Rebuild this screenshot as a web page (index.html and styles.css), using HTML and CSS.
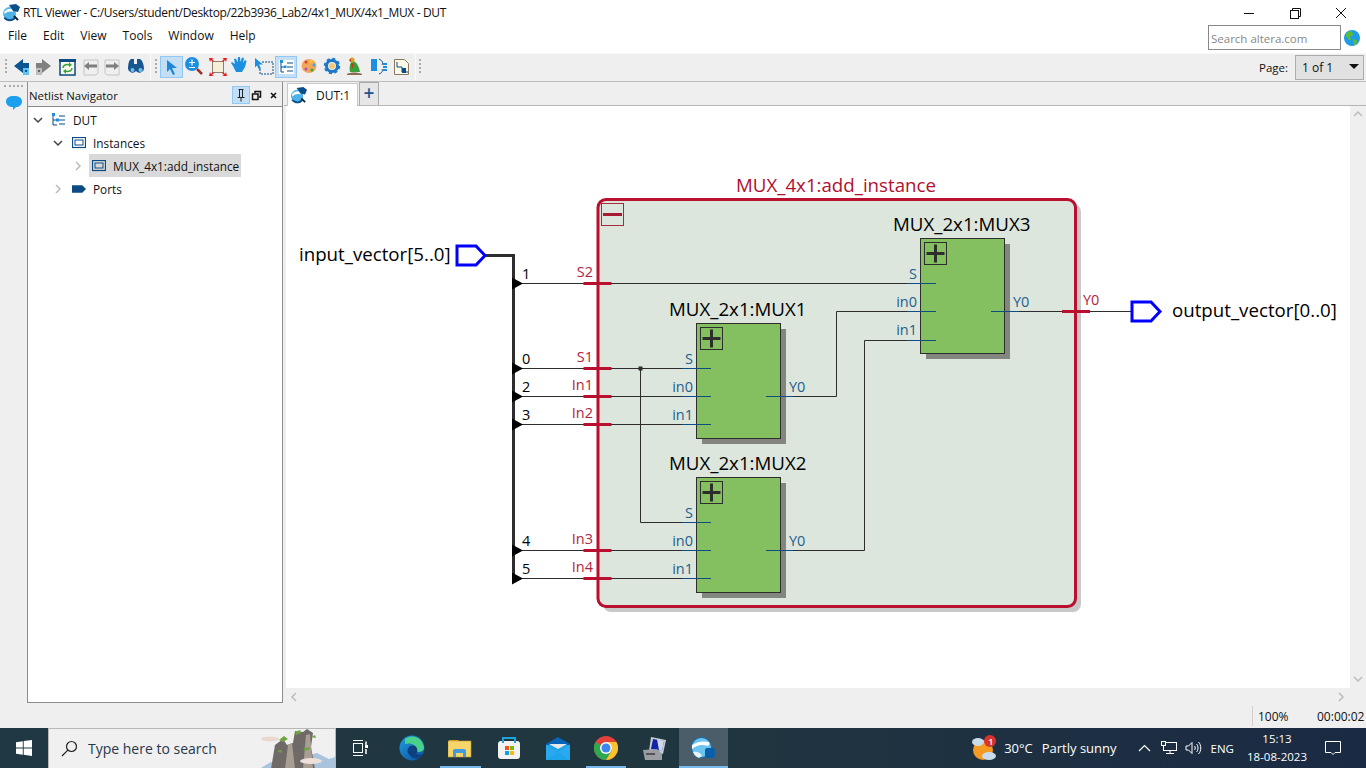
FILE: index.html
```html
<!DOCTYPE html>
<html lang="en">
<head>
    <meta charset="UTF-8">
    <meta name="viewport" content="width=device-width, initial-scale=1.0">
    <title>RTL Viewer</title>
    <link rel="stylesheet" href="styles.css">
</head>
<body>
    <svg class="defs" width="0" height="0">
        <defs>
            <symbol id="logo" viewBox="0 0 18 18">
                <circle cx="7.5" cy="9.5" r="6.5" fill="#4fb3e8"/>
                <path d="M2 8c2-3 6-4 10-3l-1 3c-3-1-6-.5-8 2z" fill="#fff"/>
                <path d="M3 13c3 3 7 3 9 0l1.500 1.500c-3 4-9 3.500-12-.5z" fill="#0b4f8a"/>
                <path d="M7 1l7-1 4 3-2 5-5-1z" fill="#0b4f8a"/>
                <path d="M12 12l4 4" stroke="#123" stroke-width="2"/>
            </symbol>
            <g id="mux-box">
                <rect x="5.500" y="5.500" width="84" height="115" class="mux-shadow"/>
                <rect x="0" y="0" width="84" height="115" class="mux-body"/>
                <rect x="4" y="4" width="22" height="22" class="mux-toggle"/>
                <path d="M6 15h18M15 6v18" class="mux-plus"/>
            </g>
            <polygon id="tap" points="0,-6 0,6 11,0" fill="#000"/>
        </defs>
    </svg>

    <div class="app">
        <div class="titlebar">
            <svg class="title-logo" width="18" height="18"><use href="#logo"/></svg>
            <span class="title-text">RTL Viewer - C:/Users/student/Desktop/22b3936_Lab2/4x1_MUX/4x1_MUX - DUT</span>
            <div class="window-btns">
                <svg class="win-btn" width="46" height="20" viewBox="0 0 46 20"><path d="M18 10.500h10" stroke="#111"/></svg>
                <svg class="win-btn" width="46" height="20" viewBox="0 0 46 20" fill="none" stroke="#111"><rect x="18.500" y="7.500" width="8" height="8"/><path d="M20.500 7.500v-2h8v8h-2"/></svg>
                <svg class="win-btn" width="46" height="20" viewBox="0 0 46 20"><path d="M18 5l10 10M28 5l-10 10" stroke="#111"/></svg>
            </div>
        </div>

        <div class="menubar">
            <span class="menu-item">File</span>
            <span class="menu-item">Edit</span>
            <span class="menu-item">View</span>
            <span class="menu-item">Tools</span>
            <span class="menu-item">Window</span>
            <span class="menu-item">Help</span>
            <div class="search-wrap">
                <div class="search-box">Search altera.com</div>
                <svg width="18" height="18" viewBox="0 0 18 18">
                    <circle cx="9" cy="9" r="8" fill="#1b9be8"/>
                    <path d="M4 3l5-1 1 4-3 2 1 3-2 0-3-4zM10 10l4 1-1 5-2 0z" fill="#5fbf2a"/>
                </svg>
            </div>
        </div>

        <div class="toolbar">
            <!-- toolbar buttons, coordinates are page coordinates -->
            <svg class="tool-icons" width="430" height="28" viewBox="0 53 430 28">
                <path d="M5 60h2M5 64h2M5 68h2M5 72h2M155 60h2M155 64h2M155 68h2M155 72h2M419 60h2M419 64h2M419 68h2M419 72h2" stroke="#aaa" stroke-width="2"/>
                <path d="M150.500 54v27M415.500 54v27" stroke="#fafafa"/>

                <path d="M14 66l9-7v4h6v6h-6v4z" fill="#0b5590"/>
                <rect x="23" y="68" width="6" height="7" fill="#63c1ef"/><rect x="25" y="70" width="2" height="2" fill="#0b5590"/>
                <path d="M51 66l-9-7v4h-6v6h6v4z" fill="#808080"/>
                <rect x="36" y="68" width="6" height="7" fill="#bdbdbd"/><rect x="38" y="70" width="2" height="2" fill="#666"/>

                <rect x="60" y="60" width="15" height="15" fill="#f6f9ea" stroke="#0b4a82" stroke-width="1.500"/>
                <rect x="59" y="59" width="17" height="3" fill="#0b4a82"/>
                <path d="M63 68c0-3 3-4 7-3M72 68c0 3-3 4-7 3" fill="none" stroke="#3a9c3a" stroke-width="1.500"/>
                <path d="M69 62l3 3-3 2zM66 69l-3 2 3 3z" fill="#3a9c3a"/>

                <path d="M84 60h14v13l-2 2H84z" fill="none" stroke="#c4c4c4"/>
                <path d="M84 66l5-4v2.500h8v3h-8v2.500z" fill="#7f7f7f"/>
                <path d="M105 60h14v15h-12l-2-2z" fill="none" stroke="#c4c4c4"/>
                <path d="M119 66l-5-4v2.500h-8v3h8v2.500z" fill="#7f7f7f"/>

                <path d="M128 69c0-5 1-9 3-10h3v5h3v-5h3c2 1 4 5 4 10a4.500 4.500 0 0 1-8 2 4.500 4.500 0 0 1-8-2z" fill="#17568f"/>
                <circle cx="132.500" cy="70" r="2" fill="#74bfe8"/><circle cx="140.500" cy="70" r="2" fill="#74bfe8"/>

                <rect x="160.500" y="56.500" width="22" height="21" fill="#c3def5" stroke="#90c8f6"/>
                <path d="M167 60l10 8h-5l3 6-2 1-3-6-3 3z" fill="#1c88d8"/>

                <circle cx="192" cy="64" r="7" fill="#1c8fe0"/>
                <path d="M189 62.500h6M192 59.500v6M189 67.500h6" stroke="#fff" stroke-width="1.200"/>
                <path d="M197 69l5 5" stroke="#9e2f2a" stroke-width="2.500"/>

                <rect x="212.500" y="61.500" width="11" height="11" fill="#f6eed6" stroke="#8f7f70"/>
                <path d="M209 58h5l-2 1 2 2-1 1-2-2-1 2zM227 58h-5l2 1-2 2 1 1 2-2 1 2zM209 76h5l-2-1 2-2-1-1-2 2-1-2zM227 76h-5l2-1-2-2 1-1 2 2 1-2z" fill="#e02020"/>

                <path d="M233 66l-2-3 1-1 3 2-1-5 2-.500 1.500 4 .5-5.500h2l.5 5 1.500-4.500 2 .5-1 5 2-3 1.500 1-1.500 6-3 5h-6z" fill="#1c8fe0"/>

                <path d="M255 58l8 6.500h-4l2 4-2 1-2-4-2 2z" fill="#1c8fe0"/>
                <path d="M262 62h11v12h-13v-5" fill="none" stroke="#0b4a82" stroke-dasharray="2 1"/>

                <rect x="275.500" y="56.500" width="21" height="21" fill="#c3def5" stroke="#90c8f6"/>
                <rect x="279" y="60" width="15" height="14" fill="#fff"/>
                <path d="M281 63v9h3M281 67h3M287 63h6M287 67h6M287 71h6" fill="none" stroke="#0b4a82"/>
                <rect x="280" y="60" width="3" height="3" fill="#1c8fe0"/><rect x="284" y="65.500" width="2.500" height="2.500" fill="#1c8fe0"/>

                <ellipse cx="309" cy="66" rx="7.500" ry="7" fill="#f2a65a"/>
                <circle cx="306" cy="62" r="1.500" fill="#e23a3a"/><circle cx="311" cy="61.500" r="1.500" fill="#f6d32a"/>
                <circle cx="314" cy="65" r="1.500" fill="#3aa8e8"/><circle cx="312" cy="70" r="1.500" fill="#38a838"/><circle cx="306" cy="69" r="1.500" fill="#b050c0"/>

                <circle cx="332" cy="66" r="5.500" fill="none" stroke="#1c78c8" stroke-width="3"/>
                <circle cx="332" cy="66" r="7" fill="none" stroke="#1c78c8" stroke-width="2.500" stroke-dasharray="3 2.500"/>
                <circle cx="332" cy="66" r="3" fill="#f2c77a"/>

                <path d="M347 74c4-2 10-2 15 0v1h-15z" fill="#8a6a50"/>
                <path d="M350 72c-1-5 0-10 3-11 4 1 6 6 7 11z" fill="#3aa03a"/>
                <circle cx="352" cy="60" r="2.500" fill="#d8a020"/><path d="M349 60l2-1v3z" fill="#c03020"/><path d="M351 63l3 1-2 5z" fill="#d03020"/>

                <rect x="371" y="59" width="6" height="12" fill="#1c8fe0"/>
                <path d="M379 59c4 2 4 4 3 6M379 74c3-1 4-3 3-5" fill="none" stroke="#0b4a82"/>
                <path d="M383 64h4M383 67h4M383 70h4" stroke="#1c8fe0" stroke-width="2"/>

                <path d="M394.500 59.500h10l4 4v11h-14z" fill="#fbf8ea" stroke="#8a7a60"/>
                <path d="M397 62v5h5v5h6" fill="none" stroke="#0b4a82"/>
                <rect x="402" y="68" width="4" height="5" fill="#0b4a82"/>
            </svg>
            <div class="page-select">
                <span class="page-label">Page:</span>
                <div class="combo"><span>1 of 1</span><i class="combo-arrow"></i></div>
            </div>
        </div>

        <div class="main">
            <div class="strip">
                <div class="strip-grip"></div>
                <svg width="16" height="14" viewBox="0 0 16 14"><path d="M8 0c5 0 8 2 8 5.500S13 11 10 11l-3 3v-3C3 11 0 9 0 5.500S3 0 8 0z" fill="#1b9fef"/></svg>
            </div>

            <div class="navigator">
                <div class="nav-header">
                    <span class="nav-title">Netlist Navigator</span>
                    <div class="nav-btns">
                        <svg class="pin-btn" width="16" height="16" viewBox="0 0 16 16"><path d="M5.500 2.500h5M6.500 2.500v8h3v-8M4.500 10.500h7M8 10.500v4" fill="none" stroke="#222"/></svg>
                        <svg width="11" height="11" viewBox="0 0 11 11" fill="none" stroke="#111"><rect x="1.500" y="4" width="5.500" height="5.500" stroke-width="1.500"/><path d="M4 3V1.500h5.500V7H8" stroke-width="1.500"/></svg>
                        <svg width="9" height="9" viewBox="0 0 9 9"><path d="M2 2l5 5M7 2l-5 5" stroke="#111" stroke-width="1.600"/></svg>
                    </div>
                </div>
                <div class="tree">
                    <div class="tree-row level-0">
                        <svg class="twist" width="12" height="12" viewBox="0 0 12 12"><path d="M2 4l4 4 4-4" class="twist-open"/></svg>
                        <div class="node">
                            <svg class="node-icon" width="14" height="14" viewBox="0 0 14 14"><path d="M1 2v10h4M1 7h4M7 3h6M7 7h6M7 11h6" fill="none" stroke="#0b4a82"/><rect x="0" y="0" width="3" height="3" fill="#1c8fe0"/><rect x="4" y="5.500" width="3" height="3" fill="#1c8fe0"/></svg>
                            <span>DUT</span>
                        </div>
                    </div>
                    <div class="tree-row level-1">
                        <svg class="twist" width="12" height="12" viewBox="0 0 12 12"><path d="M2 4l4 4 4-4" class="twist-open"/></svg>
                        <div class="node">
                            <svg class="node-icon" width="14" height="12" viewBox="0 0 14 12"><rect x=".5" y=".5" width="13" height="10" class="inst-outer"/><rect x="3" y="3" width="8" height="5" class="inst-inner"/></svg>
                            <span>Instances</span>
                        </div>
                    </div>
                    <div class="tree-row level-2">
                        <svg class="twist" width="12" height="12" viewBox="0 0 12 12"><path d="M4 2l4 4-4 4" class="twist-closed"/></svg>
                        <div class="node selected">
                            <svg class="node-icon" width="14" height="12" viewBox="0 0 14 12"><rect x=".5" y=".5" width="13" height="10" class="inst-outer"/><rect x="3" y="3" width="8" height="5" class="inst-inner"/></svg>
                            <span>MUX_4x1:add_instance</span>
                        </div>
                    </div>
                    <div class="tree-row level-1">
                        <svg class="twist" width="12" height="12" viewBox="0 0 12 12"><path d="M4 2l4 4-4 4" class="twist-closed"/></svg>
                        <div class="node">
                            <svg class="node-icon" width="15" height="8" viewBox="0 0 15 8"><path d="M0 0h11l4 4-4 4H0z" fill="#0b4a82"/></svg>
                            <span>Ports</span>
                        </div>
                    </div>
                </div>
            </div>

            <div class="workspace">
                <div class="tabs">
                    <div class="tab">
                        <svg width="17" height="17"><use href="#logo"/></svg>
                        <span>DUT:1</span>
                    </div>
                    <div class="tab-add">+</div>
                </div>
                <div class="canvas-row">
                    <svg class="schematic" width="1064" height="582" viewBox="286 106 1064 582">
                        <!-- group box -->
                        <rect x="603" y="204" width="478" height="408" rx="8" class="group-shadow"/>
                        <rect x="598" y="199.500" width="477.500" height="407" rx="8" class="group-box"/>
                        <rect x="601.500" y="203.500" width="22" height="22" class="group-toggle"/>
                        <path d="M603 214.500h19" class="group-minus"/>
                        <text x="736" y="192" class="t-title">MUX_4x1:add_instance</text>

                        <!-- wires -->
                        <path d="M486 255.500h27.500V578" class="bus"/>
                        <path d="M513 283.500h407M513 368.500h183M513 396.500h183M513 424.500h183M513 550.500h183M513 578.500h183" class="wire"/>
                        <path d="M640.500 368.500V522.500H696M766 396.500h70.500V311.500H920M766 550.500h98.500V340.500H920M991 311.500h140" class="wire"/>
                        <rect x="638.500" y="366.500" width="4" height="4" fill="#2d2d2d"/>

                        <use href="#tap" x="512" y="283.500"/>
                        <use href="#tap" x="512" y="368.500"/>
                        <use href="#tap" x="512" y="396.500"/>
                        <use href="#tap" x="512" y="424.500"/>
                        <use href="#tap" x="512" y="550.500"/>
                        <use href="#tap" x="512" y="578.500"/>

                        <!-- ports -->
                        <path d="M457 246h19l9 9.500-9 9.500h-19z" class="port"/>
                        <path d="M1132 302h19l9 9.500-9 9.500h-19z" class="port"/>
                        <text x="299" y="261" class="t-name">input_vector[5..0]</text>
                        <text x="1172" y="317" class="t-name">output_vector[0..0]</text>

                        <!-- bus indexes -->
                        <text x="522" y="279" class="t-num">1</text>
                        <text x="522" y="364" class="t-num">0</text>
                        <text x="522" y="392" class="t-num">2</text>
                        <text x="522" y="420" class="t-num">3</text>
                        <text x="522" y="546" class="t-num">4</text>
                        <text x="522" y="574" class="t-num">5</text>

                        <!-- group pins -->
                        <path d="M583.500 283.500h28M583.500 368.500h28M583.500 396.500h28M583.500 424.500h28M583.500 550.500h28M583.500 578.500h28M1062 311.500h28" class="group-pin"/>
                        <text x="593" y="277" class="t-pin anchor-end">S2</text>
                        <text x="593" y="362" class="t-pin anchor-end">S1</text>
                        <text x="593" y="390" class="t-pin anchor-end">In1</text>
                        <text x="593" y="418" class="t-pin anchor-end">In2</text>
                        <text x="593" y="544" class="t-pin anchor-end">In3</text>
                        <text x="593" y="572" class="t-pin anchor-end">In4</text>
                        <text x="1083" y="305" class="t-pin">Y0</text>

                        <!-- MUX1 -->
                        <use href="#mux-box" x="696.500" y="323.500"/>
                        <text x="669" y="316" class="t-name">MUX_2x1:MUX1</text>
                        <path d="M682 368.500h29M682 396.500h29M682 424.500h29M766 396.500h27" class="mux-pin"/>
                        <text x="693" y="364" class="t-mux anchor-end">S</text>
                        <text x="693" y="392" class="t-mux anchor-end">in0</text>
                        <text x="693" y="420" class="t-mux anchor-end">in1</text>
                        <text x="789" y="392" class="t-mux">Y0</text>

                        <!-- MUX2 -->
                        <use href="#mux-box" x="696.500" y="477.500"/>
                        <text x="669" y="470" class="t-name">MUX_2x1:MUX2</text>
                        <path d="M682 522.500h29M682 550.500h29M682 578.500h29M766 550.500h27" class="mux-pin"/>
                        <text x="693" y="518" class="t-mux anchor-end">S</text>
                        <text x="693" y="546" class="t-mux anchor-end">in0</text>
                        <text x="693" y="574" class="t-mux anchor-end">in1</text>
                        <text x="789" y="546" class="t-mux">Y0</text>

                        <!-- MUX3 -->
                        <use href="#mux-box" x="920.500" y="238.500"/>
                        <text x="893" y="231" class="t-name">MUX_2x1:MUX3</text>
                        <path d="M907 283.500h29M907 311.500h29M907 340.500h29M991 311.500h28" class="mux-pin"/>
                        <text x="917" y="279" class="t-mux anchor-end">S</text>
                        <text x="917" y="307" class="t-mux anchor-end">in0</text>
                        <text x="917" y="335" class="t-mux anchor-end">in1</text>
                        <text x="1013" y="307" class="t-mux">Y0</text>
                    </svg>
                    <div class="vscroll">
                        <svg width="12" height="8" viewBox="0 0 12 8"><path d="M2 6l4-4 4 4" class="twist-closed"/></svg>
                        <svg width="12" height="8" viewBox="0 0 12 8"><path d="M2 2l4 4 4-4" class="twist-closed"/></svg>
                    </div>
                </div>
                <div class="hscroll">
                    <svg width="8" height="12" viewBox="0 0 8 12"><path d="M6 2L2 6l4 4" class="twist-closed"/></svg>
                    <svg width="8" height="12" viewBox="0 0 8 12"><path d="M2 2l4 4-4 4" class="twist-closed"/></svg>
                </div>
            </div>
        </div>

        <div class="statusbar">
            <span class="status-zoom">100%</span>
            <span class="status-time">00:00:02</span>
        </div>

        <div class="taskbar">
            <div class="start">
                <svg width="16" height="16" viewBox="0 0 16 16"><path d="M0 2.300l6.800-1v6.200H0zM7.700 1.100L16 0v7.500H7.700zM0 8.400h6.800v6.300l-6.800-1zM7.700 8.400H16V16l-8.300-1.200z" fill="#fff"/></svg>
            </div>
            <div class="task-search">
                <svg width="17" height="17" viewBox="0 0 17 17" fill="none" stroke="#222" stroke-width="1.200"><circle cx="10.500" cy="6.500" r="5"/><path d="M6.800 10.200L1 16"/></svg>
                <span>Type here to search</span>
                <svg class="search-art" width="76" height="40" viewBox="0 0 76 40">
                    <path d="M0 40l12-7 10 3 20-8 16-4 12 6 6-2v12z" fill="#a9c4dc"/>
                    <path d="M12 40l4-24 8-6 4 6 6-2 2-12 8 1 4-3 6 4-2 14 4 22z" fill="#6f6a68"/>
                    <path d="M26 40l3-24 4-2 3 26zM44 40l3-34 4-1 3 35z" fill="#a89f92"/>
                    <path d="M20 11l5-4 4 3-5 3zM36 3l5-2 1 3-5 2zM44 20l6-2 1 2-5 2zM18 22l5-1-1 3zM52 8l4-2 1 3z" fill="#6fa53c"/>
                    <ellipse cx="11" cy="10" rx="9" ry="2.500" fill="#e8d8d0"/>
                    <ellipse cx="52" cy="32" rx="11" ry="3" fill="#efe0d8"/>
                </svg>
            </div>
            <div class="task-view">
                <svg width="16" height="16" viewBox="0 0 16 16" fill="none" stroke="#fff"><path d="M1 .5h10M1 15.500h10"/><rect x="1.500" y="3.500" width="9" height="9"/><path d="M14 1.500v5M14 9v5" stroke-width="1.500"/><rect x="13" y="5" width="3" height="3" fill="#fff" stroke="none"/></svg>
            </div>
            <div class="task-apps">
                <div class="app-cell">
                    <svg width="26" height="26" viewBox="0 0 26 26">
                        <defs><linearGradient id="edgeg" x1="0" y1="0" x2="1" y2="1"><stop offset="0" stop-color="#1f9ce0"/><stop offset="1" stop-color="#0b4f98"/></linearGradient></defs>
                        <circle cx="13" cy="13" r="12.500" fill="url(#edgeg)"/>
                        <path d="M6 4c6-5 17-3 19 8 .5 5-5 6-8 4 2-5-4-9-11-7z" fill="#49d18c"/>
                        <path d="M9 18c-2-5 3-9 7-7 3 2 3 6 1 8 4 1 6 1 7 0-3 5-10 7-15-1z" fill="#0e3f80"/>
                    </svg>
                </div>
                <div class="app-cell open">
                    <svg width="24" height="20" viewBox="0 0 24 20">
                        <path d="M1 2h9l2 2h-11z" fill="#d9a21b"/>
                        <rect x="0" y="3" width="23" height="16" fill="#f6d66b" stroke="#c79a2a" stroke-width=".6"/>
                        <path d="M5 19v-6a2 2 0 0 1 2-2h9a2 2 0 0 1 2 2v6h-3v-4H8v4z" fill="#3f9bde"/>
                    </svg>
                </div>
                <div class="app-cell">
                    <svg width="24" height="24" viewBox="0 0 24 24">
                        <rect x="1" y="5" width="22" height="18" rx="3" fill="#f2f2f2"/>
                        <path d="M6 7V2h12v5" fill="none" stroke="#1aa6dc" stroke-width="2"/>
                        <rect x="8" y="10" width="4" height="4" fill="#f25022"/><rect x="13" y="10" width="4" height="4" fill="#7fba00"/>
                        <rect x="8" y="15" width="4" height="4" fill="#00a4ef"/><rect x="13" y="15" width="4" height="4" fill="#ffb900"/>
                    </svg>
                </div>
                <div class="app-cell">
                    <svg width="24" height="23" viewBox="0 0 24 23">
                        <path d="M0 7L12 0l12 7v1H0z" fill="#0864b8"/>
                        <path d="M0 8h24v15H0z" fill="#1ea4ea"/>
                        <path d="M3 7h18l-9 5z" fill="#e8e8e8"/>
                        <path d="M0 8l12 7 12-7v15L12 15 0 23z" fill="#2ba9ee"/>
                    </svg>
                </div>
                <div class="app-cell open">
                    <svg width="24" height="24" viewBox="0 0 24 24">
                        <circle cx="12" cy="12" r="12" fill="#e5413a"/>
                        <path d="M12 12L1.600 6A12 12 0 0 0 12 24l6-10z" fill="#2fa84f"/>
                        <path d="M12 6h10.400A12 12 0 0 1 12 24l6-10z" fill="#f9c22e"/>
                        <circle cx="12" cy="12" r="6" fill="#fff"/>
                        <circle cx="12" cy="12" r="4.500" fill="#3f84f0"/>
                    </svg>
                </div>
                <div class="app-cell">
                    <svg width="24" height="24" viewBox="0 0 24 24">
                        <path d="M8 1l15 3-3 14-14-3z" fill="#c8ccd2"/>
                        <path d="M10 3l11 2-2 10-11-2z" fill="#1026a8"/>
                        <path d="M14 3l7 2-2 10-3-.5z" fill="#cfd8f0"/>
                        <path d="M0 14l14-1 5 5v6H2z" fill="#9a9ea4"/>
                        <path d="M3 17h9v2H3z" fill="#555"/>
                    </svg>
                </div>
                <div class="app-cell active">
                    <svg width="24" height="22" viewBox="0 0 24 22">
                        <circle cx="10.500" cy="10.500" r="10" fill="#6cc4f0" stroke="#0b6cb0"/>
                        <path d="M1 8c6-4 12-4 17-3 1 2 0 3-1 4-6-2-11-1-16 3z" fill="#fff"/>
                        <path d="M2 15c4-1 8 1 9 4l-3 2c-3-1-5-3-6-6z" fill="#e8f4fb"/>
                        <rect x="14" y="11" width="10" height="10" rx="2" fill="#0b5fa8"/>
                    </svg>
                </div>
            </div>
            <div class="tray">
                <svg class="tray-weather" width="25" height="26" viewBox="0 0 25 26">
                    <circle cx="11" cy="15" r="10" fill="#f59a23"/>
                    <ellipse cx="6" cy="7" rx="6" ry="4" fill="#c9dceb"/>
                    <ellipse cx="17" cy="21" rx="7" ry="4" fill="#c9dceb"/>
                    <circle cx="18" cy="6" r="6" fill="#d9342b"/>
                </svg>
                <span class="weather-badge">1</span>
                <span class="tray-temp">30°C</span>
                <span class="tray-cond">Partly sunny</span>
                <svg class="tray-caret" width="13" height="8" viewBox="0 0 13 8"><path d="M1 7l5.500-5.500L12 7" fill="none" stroke="#fff" stroke-width="1.200"/></svg>
                <svg class="tray-net" width="16" height="14" viewBox="0 0 16 14" fill="none" stroke="#fff"><rect x="2.500" y="1.500" width="13" height="8"/><path d="M9 9.500v3M5 12.500h8"/><rect x=".5" y=".5" width="4" height="4" fill="#22384a"/></svg>
                <svg class="tray-vol" width="17" height="14" viewBox="0 0 17 14" fill="none" stroke="#fff"><path d="M1 5h2.500L7 1.500v11L3.500 9H1zM9.500 5c1 1 1 3 0 4M11.500 3c2 2 2 6 0 8M13.500 1c3 3 3 9 0 12"/></svg>
                <span class="tray-lang">ENG</span>
                <div class="clock"><span>15:13</span><span>18-08-2023</span></div>
                <svg class="tray-note" width="18" height="16" viewBox="0 0 18 16" fill="none" stroke="#fff"><path d="M1.500 1.500h15v11H11l-2 2-2-2H1.500z"/></svg>
            </div>
        </div>
    </div>
</body>
</html>
```

FILE: styles.css
```css
body {
    margin: 0;
    padding: 0;
    font-family: 'Open Sans', 'Noto Sans', sans-serif;
    font-size: 12px;
    color: #111;
    background-color: #efefef;
}

.defs {
    position: absolute;
}

svg {
    display: block;
    flex: none;
}

.app {
    display: flex;
    flex-direction: column;
    width: 1366px;
    height: 768px;
    overflow: hidden;
}

/* title + menu */
.titlebar {
    display: flex;
    align-items: center;
    height: 25px;
    background: #fff;
}

.title-logo {
    margin-left: 2px;
}

.title-text {
    margin-left: 3px;
    font-size: 12px;
    letter-spacing: -0.35px;
}

.window-btns {
    display: flex;
    margin-left: auto;
    padding-right: 2px;
}

.menubar {
    display: flex;
    height: 28px;
    background: #fff;
    padding-left: 8px;
    font-size: 12px;
}

.menu-item {
    margin-right: 16px;
    line-height: 22px;
}

.search-wrap {
    display: flex;
    align-items: center;
    gap: 2px;
    height: 25px;
    margin-left: auto;
    padding-right: 5px;
}

.search-box {
    box-sizing: border-box;
    width: 133px;
    height: 25px;
    padding-left: 2px;
    border: 1px solid #888;
    color: #888;
    font-size: 11.5px;
    line-height: 26px;
}

.toolbar {
    display: flex;
    justify-content: space-between;
    align-items: center;
    box-sizing: border-box;
    height: 29px;
    background: #efefef;
    border-top: 1px solid #f8f8f8;
    border-bottom: 1px solid #bdbdbd;
}

.tool-icons {
    align-self: flex-start;
    margin-top: -1px;
}

.page-select {
    display: flex;
    align-items: center;
    gap: 7px;
    padding-right: 2px;
}

.page-label {
    font-size: 11.5px;
}

.combo {
    display: flex;
    justify-content: space-between;
    align-items: center;
    box-sizing: border-box;
    width: 69px;
    height: 25px;
    padding: 0 4px 0 6px;
    background: #e1e1e1;
    border: 1px solid #adadad;
}

.combo-arrow {
    width: 0;
    height: 0;
    margin-bottom: 3px;
    border-left: 5px solid transparent;
    border-right: 5px solid transparent;
    border-top: 5px solid #111;
}

/* main area */
.main {
    display: flex;
    height: 623px;
}

.strip {
    display: flex;
    flex-direction: column;
    align-items: center;
    gap: 9px;
    width: 27px;
    padding-top: 3px;
    box-sizing: border-box;
}

.strip-grip {
    width: 19px;
    border-top: 2px dotted #aaa;
}

.navigator {
    display: flex;
    flex-direction: column;
    box-sizing: border-box;
    width: 256px;
    height: 621px;
    border: 1px solid #8c8c8c;
    border-top: 0;
    margin-right: 1px;
    margin-left: 0;
}

.nav-header {
    display: flex;
    justify-content: space-between;
    align-items: center;
    box-sizing: border-box;
    height: 25px;
    padding: 2px 4px 0 1px;
    border-bottom: 1px solid #8c8c8c;
}

.nav-title {
    padding-top: 1px;
    font-size: 11.4px;
}

.nav-btns {
    display: flex;
    align-items: center;
    gap: 7px;
}

.pin-btn {
    background: #c3def5;
    outline: 1px solid #90c8f6;
    margin-right: -5px;
}

.tree {
    flex: 1;
    padding-top: 1px;
    background: #fff;
}

.tree-row {
    display: flex;
    align-items: center;
    height: 23px;
    font-size: 11.8px;
}

.level-0 { padding-left: 4px; }
.level-1 { padding-left: 24px; }
.level-2 { padding-left: 44px; }

.twist {
    margin-right: 5px;
}

.twist-open {
    fill: none;
    stroke: #444;
    stroke-width: 1.500;
}

.twist-closed {
    fill: none;
    stroke: #bbb;
    stroke-width: 1.500;
}

.node {
    display: flex;
    align-items: center;
    box-sizing: border-box;
    height: 23px;
    padding: 1px 2px 0 3px;
}

.node-icon {
    width: 14px;
    margin-right: 7px;
}

.selected {
    background: #d9d9d9;
}

.inst-outer,
.inst-inner {
    fill: none;
    stroke: #0b4a82;
}

.inst-outer {
    stroke-width: 1.200;
}

.workspace {
    display: flex;
    flex-direction: column;
    flex: 1;
    min-width: 0;
}

.tabs {
    display: flex;
    align-items: flex-end;
    box-sizing: border-box;
    height: 24px;
    padding-left: 3px;
    gap: 1px;
    border-bottom: 1px solid #b5b5b5;
}

.tab {
    display: flex;
    align-items: center;
    box-sizing: border-box;
    width: 71px;
    height: 23px;
    margin-bottom: -1px;
    padding-left: 2px;
    background: #fff;
    border: 1px solid #c8c8c8;
    border-bottom: 0;
}

.tab span {
    margin-left: 9px;
}

.tab-add {
    box-sizing: border-box;
    width: 20px;
    height: 23px;
    border: 1px solid #aaa;
    border-bottom: 0;
    background: #e6e6e6;
    color: #17568f;
    font-size: 19px;
    font-weight: 600;
    line-height: 20px;
    text-align: center;
}

.canvas-row {
    display: flex;
    height: 582px;
    padding-left: 2px;
}

.schematic {
    background: #fff;
}

.vscroll {
    display: flex;
    flex-direction: column;
    justify-content: space-between;
    align-items: center;
    flex: 1;
    padding: 4px 0 5px;
}

.hscroll {
    display: flex;
    justify-content: space-between;
    align-items: center;
    height: 17px;
    padding: 0 21px 0 6px;
}

/* schematic parts */
.group-shadow { fill: #c8c8c8; }

.group-box {
    fill: #dde6dd;
    stroke: #b8102e;
    stroke-width: 3;
}

.group-toggle {
    fill: none;
    stroke: #a82a40;
}

.group-minus {
    stroke: #a81a34;
    stroke-width: 3;
}

.bus {
    fill: none;
    stroke: #2d2d2d;
    stroke-width: 3;
}

.wire {
    fill: none;
    stroke: #2d2d2d;
}

.port {
    fill: #fff;
    stroke: #0000ff;
    stroke-width: 3;
}

.group-pin {
    stroke: #b8102e;
    stroke-width: 3;
}

.mux-pin {
    stroke: #0f4c81;
}

.mux-shadow { fill: #82867f; }

.mux-body {
    fill: #84bf60;
    stroke: #2d2d2d;
}

.mux-toggle {
    fill: none;
    stroke: #2d2d2d;
}

.mux-plus {
    stroke: #2d2d2d;
    stroke-width: 3;
    fill: none;
}

.schematic text {
    font-family: 'Open Sans', 'Noto Sans', sans-serif;
}

.t-title {
    font-size: 18.7px;
    fill: #b01030;
}

.t-name {
    font-size: 18.7px;
    fill: #000;
}

.t-num {
    font-size: 14.5px;
    fill: #000;
}

.t-pin {
    font-size: 14.5px;
    fill: #b4233f;
}

.t-mux {
    font-size: 14.5px;
    fill: #1e5f8e;
}

.anchor-end {
    text-anchor: end;
}

/* status */
.statusbar {
    display: flex;
    align-items: flex-end;
    box-sizing: border-box;
    height: 23px;
    padding-left: 1258px;
    padding-bottom: 3px;
    background: #efefef;
    position: relative;
    font-size: 12px;
}

.statusbar::before {
    content: "";
    position: absolute;
    left: 1252px;
    top: 1px;
    bottom: 2px;
    width: 1px;
    background: #cfcfcf;
}

.status-zoom {
    width: 59px;
}

/* taskbar */
.taskbar {
    display: flex;
    align-items: center;
    height: 40px;
    color: #fff;
    background: linear-gradient(90deg, #1f3843 0%, #20363f 50%, #1b2a44 100%);
}

.start {
    display: flex;
    justify-content: center;
    align-items: center;
    width: 48px;
    height: 40px;
}

.task-search {
    display: flex;
    align-items: center;
    position: relative;
    box-sizing: border-box;
    width: 288px;
    height: 40px;
    padding-left: 12px;
    background: #f0f0f0;
    border: 1px solid #b8b8b8;
    border-bottom: 0;
    color: #27384a;
    font-size: 14px;
    overflow: hidden;
}

.task-search span {
    margin-left: 10px;
}

.search-art {
    position: absolute;
    right: 0;
    top: 0;
}

.task-view {
    display: flex;
    justify-content: center;
    width: 48px;
}

.task-apps {
    display: flex;
    margin-left: 3.500px;
}

.app-cell {
    display: flex;
    justify-content: center;
    align-items: center;
    position: relative;
    width: 48.600px;
    height: 40px;
}

.open::after {
    content: "";
    position: absolute;
    left: 4px;
    right: 4px;
    bottom: 0;
    height: 2px;
    background: #76b9ed;
}

.active {
    background: #4a5d69;
    box-shadow: inset 0 -2px 0 #76b9ed;
}

.tray {
    display: flex;
    align-items: center;
    position: relative;
    margin-left: auto;
    height: 40px;
    font-size: 13px;
}

.weather-badge {
    position: absolute;
    left: 16px;
    top: 7px;
    font-size: 9px;
    font-weight: 600;
}

.tray-temp {
    margin-left: 7px;
}

.tray-cond {
    margin-left: 9px;
}

.tray-caret {
    margin-left: 21px;
}

.tray-net {
    margin-left: 10px;
}

.tray-vol {
    margin-left: 8px;
}

.tray-lang {
    margin-left: 9px;
    font-size: 11.5px;
}

.clock {
    display: flex;
    flex-direction: column;
    align-items: center;
    margin-left: 13px;
    font-size: 11.5px;
    line-height: 18px;
}

.tray-note {
    margin-left: 17px;
    margin-right: 24px;
}
```
